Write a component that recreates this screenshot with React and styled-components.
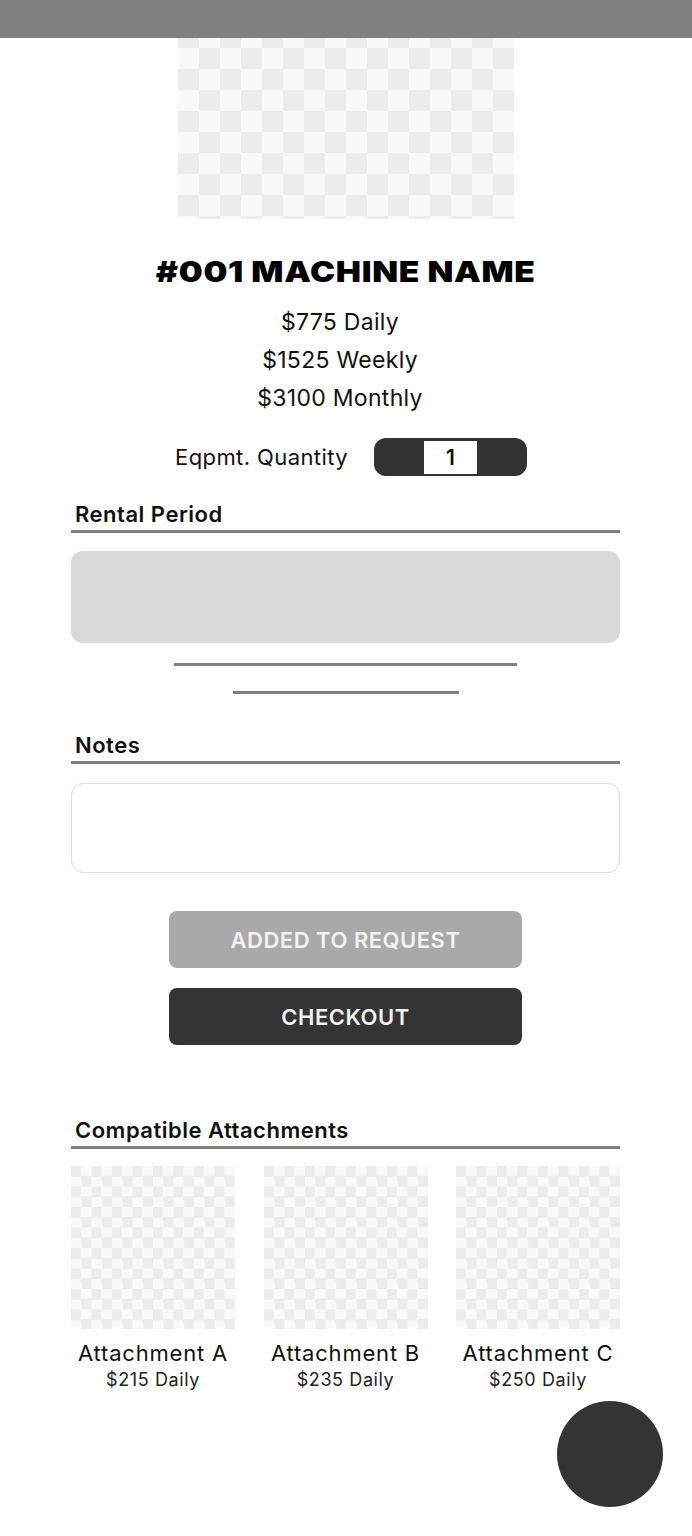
import React from "react";
import styled, { createGlobalStyle } from "styled-components";

const GlobalStyle = createGlobalStyle`
  body {
    margin: 0;
    background: #fff;
    font-family: Inter, "Noto Sans", sans-serif;
    color: #111;
  }
`;

let Page = styled.div`
  position: relative;
  width: 692px;
  min-height: 1536px;
  background: #fff;
`;

let TopBar = styled.div`
  height: 38px;
  background: #808080;
`;

let Content = styled.div`
  display: flex;
  flex-direction: column;
  padding: 0 72px 0 71px;
`;

let Checker = styled.div`
  width: ${(p) => p.w}px;
  height: ${(p) => p.h}px;
  background: repeating-conic-gradient(#f9f9f9 0 25%, #ececec 0 50%);
  background-size: ${(p) => p.cell * 2}px ${(p) => p.cell * 2}px;
  background-position: 0 ${(p) => p.offset || 0}px;
`;

let Hero = styled(Checker)`
  align-self: center;
`;

let Title = styled.h1`
  margin: 36px 0 0;
  align-self: center;
  font-size: 29px;
  line-height: 34px;
  font-weight: 900;
  letter-spacing: 0.6px;
  white-space: nowrap;
  color: #000;
  transform: scaleX(1.16);
`;

let Prices = styled.div`
  margin-top: 14px;
  padding-right: 11px;
  display: flex;
  flex-direction: column;
  align-items: center;
`;

let Price = styled.div`
  font-size: 23px;
  line-height: 38px;
  letter-spacing: 0.3px;
  color: #111;
`;

let QuantityRow = styled.div`
  margin-top: 21px;
  display: flex;
  align-items: center;
  justify-content: center;
  gap: 26px;
  padding-left: 11px;
`;

let QuantityLabel = styled.span`
  font-size: 22px;
  letter-spacing: 0.4px;
  color: #111;
`;

let Stepper = styled.div`
  display: flex;
  align-items: center;
  justify-content: center;
  width: 153px;
  height: 38px;
  border-radius: 12px;
  background: #333;
`;

let StepperValue = styled.div`
  width: 53px;
  height: 33px;
  background: #fff;
  display: flex;
  align-items: center;
  justify-content: center;
  font-size: 21px;
  font-weight: 600;
  color: #111;
`;

let SectionHeader = styled.div`
  margin-top: ${(p) => p.top}px;
  padding: 0 0 4px 4px;
  border-bottom: 3px solid #808080;
  font-size: 22px;
  line-height: 24px;
  font-weight: 600;
  letter-spacing: 0.5px;
  color: #111;
`;

let PeriodBox = styled.div`
  margin-top: 18px;
  height: 92px;
  border-radius: 12px;
  background: #d9d9d9;
`;

let Rule = styled.div`
  align-self: center;
  width: ${(p) => p.w}px;
  height: 3px;
  margin-top: ${(p) => p.top}px;
  background: #808080;
`;

let NotesBox = styled.div`
  margin-top: 19px;
  height: 88px;
  border: 1.5px solid #dedede;
  border-radius: 12px;
`;

let Button = styled.button`
  align-self: center;
  width: 353px;
  height: 57px;
  margin-top: ${(p) => p.top}px;
  border: none;
  border-radius: 8px;
  background: ${(p) => (p.dark ? "#343434" : "#a9a9a9")};
  color: #f2f2f2;
  font-family: Inter, sans-serif;
  font-size: 22px;
  font-weight: 600;
  letter-spacing: 0.5px;
  cursor: pointer;
`;

let Attachments = styled.div`
  margin-top: 17px;
  display: grid;
  grid-template-columns: repeat(3, 164px);
  justify-content: space-between;
`;

let Attachment = styled.div`
  display: flex;
  flex-direction: column;
  align-items: center;
`;

let AttachmentName = styled.div`
  margin-top: 12px;
  font-size: 22px;
  line-height: 25px;
  letter-spacing: 0.8px;
  color: #111;
  white-space: nowrap;
`;

let AttachmentPrice = styled.div`
  margin-top: 3px;
  font-size: 18px;
  line-height: 21px;
  letter-spacing: 0.6px;
  color: #222;
`;

let Fab = styled.button`
  position: absolute;
  right: 29px;
  bottom: 29px;
  width: 106px;
  height: 106px;
  border: none;
  border-radius: 50%;
  background: #343434;
  cursor: pointer;
`;

const attachments = [
  { name: "Attachment A", price: "$215 Daily" },
  { name: "Attachment B", price: "$235 Daily" },
  { name: "Attachment C", price: "$250 Daily" },
];

export default function App() {
  return (
    <Page>
      <GlobalStyle />
      <TopBar />
      <Content>
        <Hero w={336} h={181} cell={21} offset={-11} />
        <Title>#001 MACHINE NAME</Title>
        <Prices>
          <Price>$775 Daily</Price>
          <Price>$1525 Weekly</Price>
          <Price>$3100 Monthly</Price>
        </Prices>
        <QuantityRow>
          <QuantityLabel>Eqpmt. Quantity</QuantityLabel>
          <Stepper>
            <StepperValue>1</StepperValue>
          </Stepper>
        </QuantityRow>

        <SectionHeader top={26}>Rental Period</SectionHeader>
        <PeriodBox />
        <Rule w={343} top={20} />
        <Rule w={226} top={25} />

        <SectionHeader top={39}>Notes</SectionHeader>
        <NotesBox />

        <Button top={38}>ADDED TO REQUEST</Button>
        <Button top={20} dark>
          CHECKOUT
        </Button>

        <SectionHeader top={73}>Compatible Attachments</SectionHeader>
        <Attachments>
          {attachments.map((a) => (
            <Attachment key={a.name}>
              <Checker w={164} h={163} cell={10.25} />
              <AttachmentName>{a.name}</AttachmentName>
              <AttachmentPrice>{a.price}</AttachmentPrice>
            </Attachment>
          ))}
        </Attachments>
      </Content>
      <Fab aria-label="menu" />
    </Page>
  );
}
